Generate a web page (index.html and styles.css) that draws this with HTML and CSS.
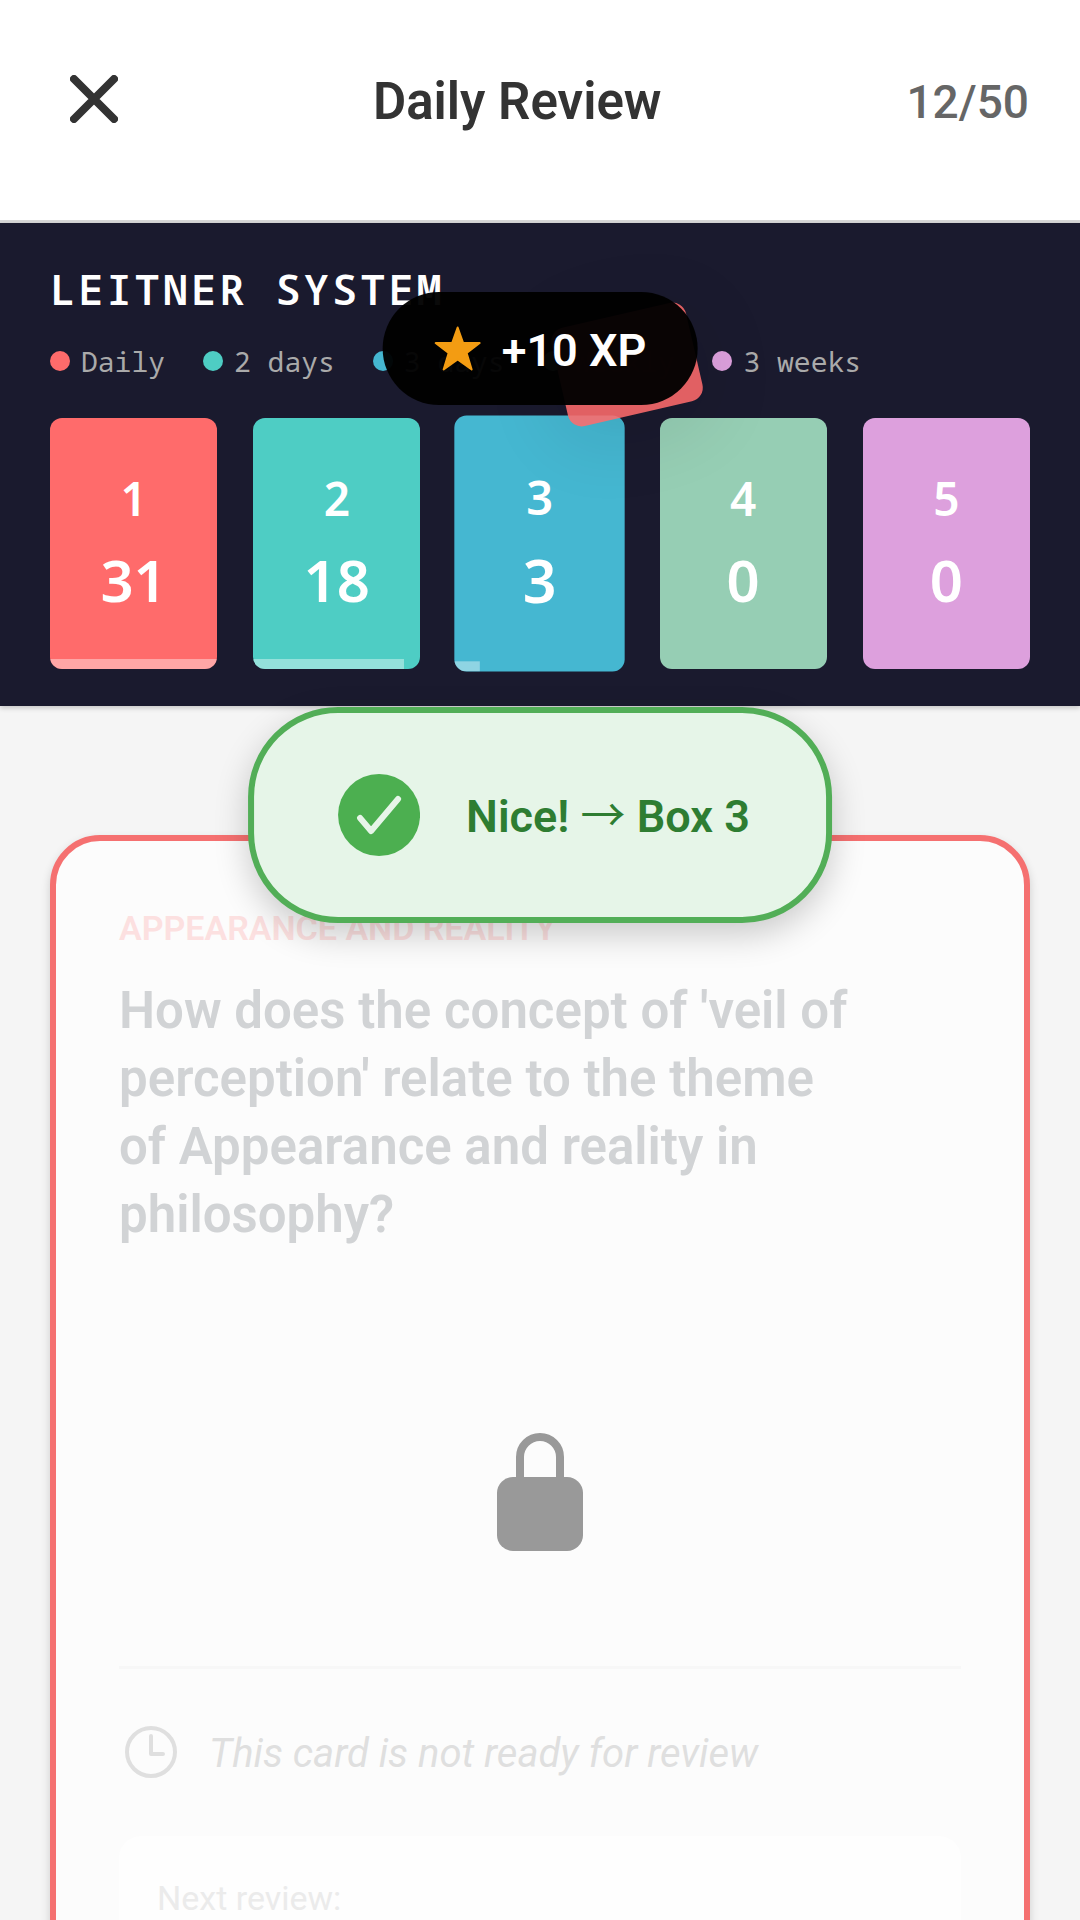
FILE: index.html
```html
<!DOCTYPE html>
<html lang="en">
<head>
<meta charset="utf-8">
<meta name="viewport" content="width=device-width, initial-scale=1">
<title>Daily Review</title>
<link rel="stylesheet" href="styles.css">
</head>
<body>
<div class="app">
  <header class="topbar">
    <button class="close" type="button" aria-label="Close">
      <svg viewBox="0 0 48 48" aria-hidden="true"><path d="M4 4 44 44M44 4 4 44"/></svg>
    </button>
    <h1 class="title">Daily Review</h1>
    <span class="count">12/50</span>
  </header>

  <section class="leitner">
    <h2 class="leitner-title">LEITNER SYSTEM</h2>
    <ul class="legend">
      <li><i class="dot red"></i>Daily</li>
      <li><i class="dot teal"></i>2 days</li>
      <li><i class="dot blue"></i>3 days</li>
      <li><i class="dot green"></i>Weekly</li>
      <li><i class="dot violet"></i>3 weeks</li>
    </ul>
    <ol class="boxes">
      <li class="box red"><span class="box-no">1</span><span class="box-count">31</span><i class="fill" style="width:100%"></i></li>
      <li class="box teal"><span class="box-no">2</span><span class="box-count">18</span><i class="fill" style="width:90%"></i></li>
      <li class="box blue active"><span class="box-no">3</span><span class="box-count">3</span><i class="fill" style="width:15%"></i></li>
      <li class="box green"><span class="box-no">4</span><span class="box-count">0</span></li>
      <li class="box violet"><span class="box-no">5</span><span class="box-count">0</span></li>
    </ol>
    <div class="flying-card"></div>
    <div class="xp">
      <svg viewBox="0 0 48 46" aria-hidden="true"><path d="M24 1.500 29.500 17H46L33 27 38 43.500 24 33.500 10 43.500 15 27 2 17H18.500Z"/></svg>
      <span>+10 XP</span>
    </div>
  </section>

  <main class="content">
    <article class="card">
      <p class="category">APPEARANCE AND REALITY</p>
      <h2 class="question">How does the concept of 'veil of perception' relate to the theme of Appearance and reality in philosophy?</h2>
      <div class="lock">
        <svg viewBox="0 0 88 120" aria-hidden="true"><path class="shackle" d="M24 48V25a20 20 0 0 1 40 0V48"/><rect x="1" y="45" width="86" height="74" rx="16"/></svg>
      </div>
      <div class="status">
        <svg viewBox="0 0 52 52" aria-hidden="true"><circle cx="26" cy="26" r="24"/><path d="M26 10V28H38"/></svg>
        <span>This card is not ready for review</span>
      </div>
      <div class="next"><span>Next review:</span></div>
    </article>
    <div class="toast" role="status">
      <svg class="tick" viewBox="0 0 82 82" aria-hidden="true"><circle cx="41" cy="41" r="41"/><path d="M22 44 33 57 60 25"/></svg>
      <span class="message">Nice! <span class="arrow">→</span> Box 3</span>
    </div>
  </main>
</div>
</body>
</html>
```
FILE: styles.css
```css
* { box-sizing: border-box; }

body {
  margin: 0;
  font-family: Roboto, "Liberation Sans", sans-serif;
  background: #f5f5f5;
}

h1, h2, p, ul, ol { margin: 0; padding: 0; }
ul, ol { list-style: none; }

.app {
  display: flex;
  flex-direction: column;
  height: 100vh;
  overflow: hidden;
}

.topbar {
  display: flex;
  align-items: center;
  justify-content: space-between;
  padding: 66px 51px 82px 60px;
  background: #fff;
  border-bottom: 3px solid #d8d8d8;
}

.close {
  width: 68px;
  height: 72px;
  padding: 0 10px 6px;
  border: 0;
  background: none;
}
.close svg {
  display: block;
  width: 48px;
  height: 48px;
  fill: none;
  stroke: #333;
  stroke-width: 8;
  stroke-linecap: round;
}

.title {
  font-size: 51px;
  line-height: 72px;
  font-weight: 600;
  color: #333;
}

.count {
  font-size: 46px;
  line-height: 72px;
  font-weight: 500;
  color: #666;
}

.leitner {
  position: relative;
  z-index: 1;
  padding: 40px 50px 37px;
  background: #1a1a2e;
  box-shadow: 0 2px 5px rgba(0, 0, 0, .2);
}

.leitner-title {
  font: 600 42px/52px "Noto Sans Mono", "Droid Sans Mono", "DejaVu Sans Mono", monospace;
  letter-spacing: 3px;
  color: #fff;
}

.legend {
  display: flex;
  gap: 38px;
  margin-top: 28px;
  white-space: nowrap;
  font: 28px/36px "Noto Sans Mono", "Droid Sans Mono", "DejaVu Sans Mono", monospace;
  color: #aaa;
}
.legend li {
  display: flex;
  align-items: center;
  gap: 11px;
}

.dot {
  width: 20px;
  height: 20px;
  border-radius: 50%;
}

.red { background: #ff6b6b; }
.teal { background: #4ecdc4; }
.blue { background: #45b7d1; }
.green { background: #96ceb4; }
.violet { background: #dda0dd; }

.boxes {
  display: grid;
  grid-template-columns: repeat(5, 1fr);
  gap: 36px;
  margin-top: 39px;
}

.box {
  position: relative;
  display: flex;
  flex-direction: column;
  align-items: center;
  height: 251px;
  padding-top: 48px;
  overflow: hidden;
  border-radius: 12px;
  font-family: "Noto Sans", sans-serif;
  font-weight: 600;
  color: #fff;
}
.box.active { transform: scale(1.02); }

.box-no { font-size: 46px; line-height: 64px; }
.box-count { margin-top: 10px; font-size: 58px; line-height: 80px; }

.fill {
  position: absolute;
  left: 0;
  bottom: 0;
  height: 10px;
  background: rgba(255, 255, 255, .4);
}

.flying-card {
  position: absolute;
  top: 91px;
  left: 50%;
  width: 138px;
  height: 101px;
  margin-left: 18px;
  border-radius: 14px;
  background: #ff6b6b;
  opacity: .87;
  transform: rotate(-13deg);
  box-shadow: 0 12px 80px rgba(0, 0, 0, .12);
}

.xp {
  position: absolute;
  top: 69px;
  left: 50%;
  display: flex;
  align-items: center;
  gap: 20px;
  height: 113px;
  padding: 0 51px;
  border-radius: 57px;
  background: rgba(0, 0, 0, .96);
  transform: translateX(-50%);
  white-space: nowrap;
  font-size: 45px;
  font-weight: 600;
  color: #fff;
}
.xp span { padding-top: 4px; }
.xp svg {
  width: 48px;
  height: 46px;
  fill: #f39c12;
  stroke: #f39c12;
  stroke-width: 2;
  stroke-linejoin: round;
}

.content {
  position: relative;
  flex: 1;
  padding: 129px 50px 0;
}

.card {
  height: 1200px;
  padding: 67px 63px;
  border: 6px solid #f57070;
  border-radius: 50px;
  background: #fcfcfc;
  box-shadow: 0 4px 10px rgba(0, 0, 0, .16);
}

.category {
  font-size: 34px;
  line-height: 40px;
  font-weight: 600;
  color: #fce0e0;
}

.question {
  max-width: 745px;
  margin-top: 29px;
  font-size: 51px;
  line-height: 68px;
  font-weight: 600;
  color: #d1d3d5;
}

.lock {
  display: flex;
  justify-content: center;
  padding: 183px 0 114px;
  border-bottom: 3px solid #f7f7f7;
}
.lock svg { width: 88px; height: 120px; fill: #999; }
.lock .shackle { fill: none; stroke: #999; stroke-width: 8; }

.status {
  display: flex;
  align-items: center;
  gap: 32px;
  margin-top: 57px;
  padding-left: 6px;
  font-size: 40px;
  line-height: 48px;
  font-style: italic;
  color: #dfdfdf;
}
.status span { padding-top: 4px; }
.status svg {
  width: 52px;
  height: 52px;
  fill: none;
  stroke: #dfdfdf;
  stroke-width: 4;
  stroke-linecap: round;
  stroke-linejoin: round;
}

.next {
  height: 220px;
  margin-top: 58px;
  padding: 42px 38px;
  border-radius: 22px;
  background: #fefefe;
  font-size: 34px;
  line-height: 40px;
  color: #ebebeb;
}

.toast {
  position: absolute;
  top: 1px;
  left: 50%;
  z-index: 2;
  display: flex;
  align-items: center;
  gap: 46px;
  height: 216px;
  padding: 0 76px 0 84px;
  border: 6px solid #52ae57;
  border-radius: 90px;
  background: #e6f5e8;
  box-shadow: 0 12px 34px rgba(0, 0, 0, .2);
  transform: translateX(-50%);
  white-space: nowrap;
  font-size: 45px;
  line-height: 56px;
  font-weight: 600;
  color: #2e7d32;
}
.tick { width: 82px; height: 82px; fill: #4caf50; }
.tick path {
  fill: none;
  stroke: #e6f5e8;
  stroke-width: 6;
  stroke-linecap: round;
  stroke-linejoin: round;
}
.message { padding-top: 4px; }
.arrow { font-family: "Noto Sans CJK JP", sans-serif; font-weight: 400; line-height: 1; }
```
